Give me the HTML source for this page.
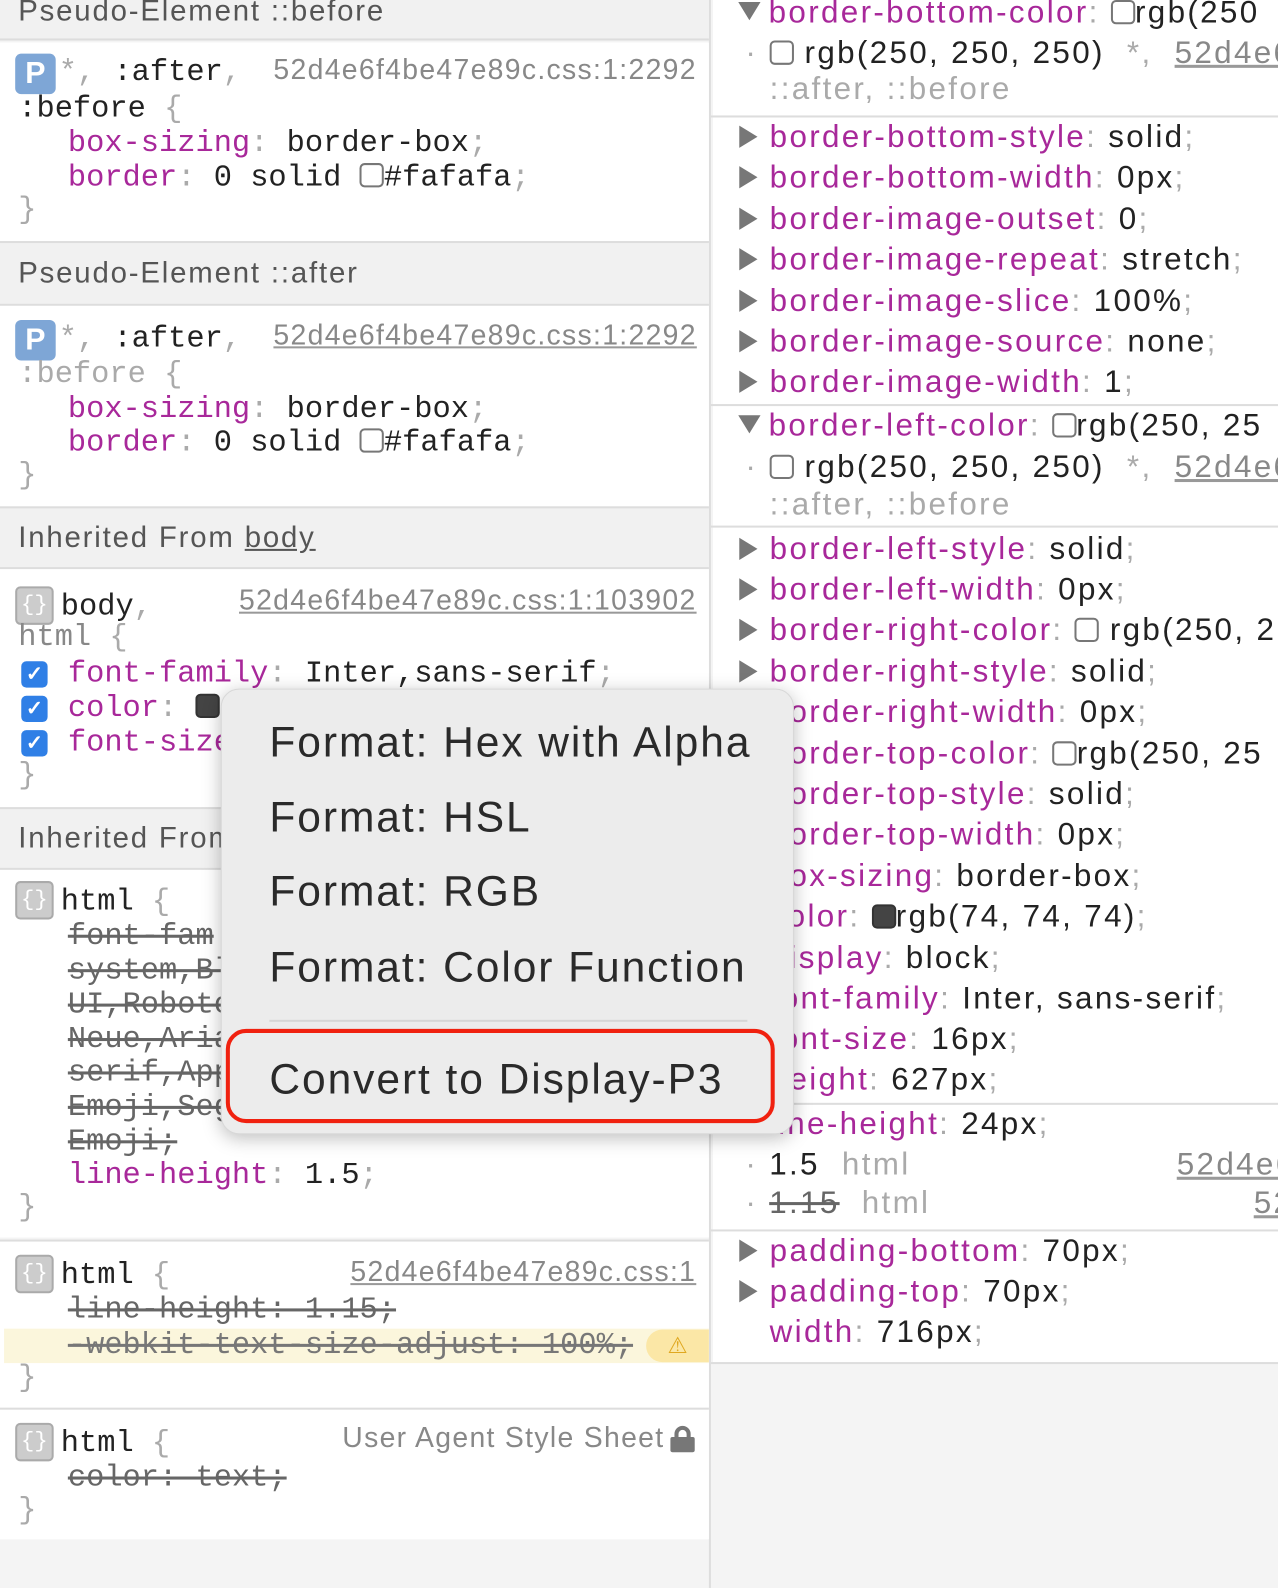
<!DOCTYPE html>
<html><head><meta charset="utf-8"><style>
*{margin:0;padding:0;box-sizing:border-box}
body{width:1278px;height:1588px;overflow:hidden;background:#f4f4f4;position:relative;font-family:"Liberation Sans",sans-serif;color:#222}
#w{position:absolute;left:0;top:0;width:1262px;height:1568px;transform:scale(1.0127);transform-origin:0 0}
.p{position:absolute}
.l{position:absolute;white-space:pre;line-height:34px;height:34px;font-family:"Liberation Mono",monospace;font-size:30px;color:#222}
.s{position:absolute;white-space:pre;line-height:40px;height:40px;font-size:31px;color:#222;letter-spacing:2.3px}
.lk{font-family:"Liberation Sans",sans-serif!important;font-size:28px!important;letter-spacing:1.3px}
.k{color:#a8289a}
.g{color:#aaa}
.dg{color:#888}
.lnk{color:#888;text-decoration:underline;text-decoration-color:#999}
.st{text-decoration:line-through;color:#666}
.hd{position:absolute;left:0;width:700px;background:#f1f1f1;border-top:2px solid #ddd;border-bottom:2px solid #ddd;font-size:29px;color:#555;padding-left:18px;letter-spacing:1.8px}
.wb{position:absolute;left:0;width:700px;background:#fff}
.sw{display:inline-block;width:24px;height:24px;border:2px solid #777;border-radius:5px;vertical-align:-2px;background:#fff}
.icP{position:absolute;width:40px;height:40px;background:#7ea6d6;border-radius:6px;color:#fff;font-family:"Liberation Sans";font-size:30px;font-weight:bold;text-align:center;line-height:40px}
.icB{position:absolute;width:38px;height:38px;background:#ccc;border:2px solid #aaa;border-radius:5px;color:#fff;font-size:22px;text-align:center;line-height:34px;font-family:"Liberation Mono"}
.cb{position:absolute;width:26px;height:26px;background:#2f7fe6;border-radius:5px;color:#fff;font-size:20px;text-align:center;line-height:26px;font-weight:bold}
.tri{display:inline-block;width:0;height:0;border-top:11px solid transparent;border-bottom:11px solid transparent;border-left:18px solid #777;margin-right:12px;vertical-align:-1px}
.trd{display:inline-block;width:0;height:0;border-left:11px solid transparent;border-right:11px solid transparent;border-top:18px solid #777;margin-right:8px;vertical-align:2px}
.rl{position:absolute;left:702px;right:0;height:2px;background:#ddd}
.m{position:absolute;white-space:pre;font-size:42px;line-height:50px;height:50px;color:#2a2a2a;letter-spacing:1.9px}
</style></head><body><div id="w">
<div class="p" style="left:0;top:0;width:702px;height:1568px;background:#f4f4f4;border-right:2px solid #ddd"></div>
<div class="hd" style="top:-2px;height:42px;line-height:22px">Pseudo-Element ::before</div>
<div class="wb" style="top:42px;height:196px"></div>
<div class="hd" style="top:238px;height:64px;line-height:60px">Pseudo-Element ::after</div>
<div class="wb" style="top:302px;height:198px"></div>
<div class="hd" style="top:500px;height:62px;line-height:58px">Inherited From <span style="text-decoration:underline">body</span></div>
<div class="wb" style="top:562px;height:235px"></div>
<div class="hd" style="top:797px;height:62px;line-height:58px">Inherited From html</div>
<div class="wb" style="top:859px;height:363px"></div>
<div class="wb" style="top:1224px;height:166px;border-top:2px solid #ddd"></div>
<div class="wb" style="top:1390px;height:130px;border-top:2px solid #ddd"></div>

<div class="icP" style="left:15px;top:53px">P</div>
<div class="l" style="left:58px;top:55px"><span class="g">*, </span>:after<span class="g">,</span></div>
<div class="l dg lk" style="left:270px;top:52px">52d4e6f4be47e89c.css:1:2292</div>
<div class="l" style="left:18px;top:91px">:before <span class="g">{</span></div>
<div class="l" style="left:67px;top:125px"><span class="k">box-sizing</span><span class="g">:</span> border-box<span class="g">;</span></div>
<div class="l" style="left:67px;top:159px"><span class="k">border</span><span class="g">:</span> 0 solid <span class="sw"></span>#fafafa<span class="g">;</span></div>
<div class="l g" style="left:18px;top:191px">}</div>

<div class="icP" style="left:15px;top:316px">P</div>
<div class="l" style="left:58px;top:318px"><span class="g">*, </span>:after<span class="g">,</span></div>
<div class="l lnk lk" style="left:270px;top:314px">52d4e6f4be47e89c.css:1:2292</div>
<div class="l g" style="left:18px;top:353px">:before {</div>
<div class="l" style="left:67px;top:388px"><span class="k">box-sizing</span><span class="g">:</span> border-box<span class="g">;</span></div>
<div class="l" style="left:67px;top:421px"><span class="k">border</span><span class="g">:</span> 0 solid <span class="sw"></span>#fafafa<span class="g">;</span></div>
<div class="l g" style="left:18px;top:453px">}</div>

<div class="icB" style="left:15px;top:579px">{}</div>
<div class="l" style="left:60px;top:583px">body<span class="g">,</span></div>
<div class="l lnk lk" style="left:236px;top:576px">52d4e6f4be47e89c.css:1:103902</div>
<div class="l dg" style="left:18px;top:613px">html <span class="g">{</span></div>
<div class="cb" style="left:21px;top:653px">✓</div>
<div class="l" style="left:67px;top:649px"><span class="k">font-family</span><span class="g">:</span> Inter,sans-serif<span class="g">;</span></div>
<div class="cb" style="left:21px;top:687px">✓</div>
<div class="l" style="left:67px;top:683px"><span class="k">color</span><span class="g">:</span> <span class="sw" style="background:#444;border-color:#333"></span></div>
<div class="cb" style="left:21px;top:721px">✓</div>
<div class="l" style="left:67px;top:717px"><span class="k">font-size</span></div>
<div class="l g" style="left:18px;top:749px">}</div>

<div class="icB" style="left:15px;top:870px">{}</div>
<div class="l" style="left:60px;top:874px">html <span class="g">{</span></div>
<div class="l st" style="left:67px;top:908px">font-fam</div>
<div class="l st" style="left:67px;top:942px">system,Bl</div>
<div class="l st" style="left:67px;top:976px">UI,Roboto</div>
<div class="l st" style="left:67px;top:1010px">Neue,Aria</div>
<div class="l st" style="left:67px;top:1043px">serif,App</div>
<div class="l st" style="left:67px;top:1077px">Emoji,Seg</div>
<div class="l st" style="left:67px;top:1111px">Emoji;</div>
<div class="l" style="left:67px;top:1144px"><span class="k">line-height</span><span class="g">:</span> 1.5<span class="g">;</span></div>
<div class="l g" style="left:18px;top:1176px">}</div>

<div class="icB" style="left:15px;top:1239px">{}</div>
<div class="l" style="left:60px;top:1243px">html <span class="g">{</span></div>
<div class="l lnk lk" style="left:346px;top:1239px">52d4e6f4be47e89c.css:1</div>
<div class="l st" style="left:67px;top:1277px">line-height: 1.15;</div>
<div class="p" style="left:4px;top:1312px;width:696px;height:34px;background:#fbf6dc"></div>
<div class="p" style="left:638px;top:1313px;width:62px;height:32px;background:#fbe7a6;border-radius:16px 0 0 16px;color:#e0a820;font-size:22px;text-align:center;line-height:32px">⚠</div>
<div class="l st" style="left:67px;top:1312px;color:#777">-webkit-text-size-adjust: 100%;</div>
<div class="l g" style="left:18px;top:1344px">}</div>

<div class="icB" style="left:15px;top:1405px">{}</div>
<div class="l" style="left:60px;top:1409px">html <span class="g">{</span></div>
<div class="l dg lk" style="left:338px;top:1403px">User Agent Style Sheet</div>
<div class="p" style="left:662px;top:1408px;width:24px;height:26px"><div style="position:absolute;left:4px;top:0;width:16px;height:16px;border:4px solid #777;border-radius:8px 8px 0 0"></div><div style="position:absolute;left:0;top:11px;width:24px;height:15px;background:#777;border-radius:2px"></div></div>
<div class="l st" style="left:67px;top:1443px">color: text;</div>
<div class="l g" style="left:18px;top:1475px">}</div>

<div class="p" style="left:704px;top:0;width:560px;height:1345px;background:#fff"></div>
<div class="rl" style="top:114px"></div>
<div class="rl" style="top:399px"></div>
<div class="rl" style="top:519px"></div>
<div class="rl" style="top:1089px"></div>
<div class="rl" style="top:1214px"></div>
<div class="rl" style="top:1345px"></div>

<div class="s" style="left:729px;top:-8px"><span class="trd"></span><span class="k">border-bottom-color</span><span class="g">:</span> <span class="sw"></span>rgb(250</div>
<div class="s" style="left:736px;top:32px"><span class="g">· </span><span class="sw"></span> rgb(250, 250, 250)  <span class="g">*,</span>  <span class="lnk">52d4e6</span></div>
<div class="s g" style="left:760px;top:68px">::after, ::before</div>
<div class="s" style="left:730px;top:115px"><span class="tri"></span><span class="k">border-bottom-style</span><span class="g">:</span> solid<span class="g">;</span></div>
<div class="s" style="left:730px;top:155px"><span class="tri"></span><span class="k">border-bottom-width</span><span class="g">:</span> 0px<span class="g">;</span></div>
<div class="s" style="left:730px;top:196px"><span class="tri"></span><span class="k">border-image-outset</span><span class="g">:</span> 0<span class="g">;</span></div>
<div class="s" style="left:730px;top:236px"><span class="tri"></span><span class="k">border-image-repeat</span><span class="g">:</span> stretch<span class="g">;</span></div>
<div class="s" style="left:730px;top:277px"><span class="tri"></span><span class="k">border-image-slice</span><span class="g">:</span> 100%<span class="g">;</span></div>
<div class="s" style="left:730px;top:317px"><span class="tri"></span><span class="k">border-image-source</span><span class="g">:</span> none<span class="g">;</span></div>
<div class="s" style="left:730px;top:357px"><span class="tri"></span><span class="k">border-image-width</span><span class="g">:</span> 1<span class="g">;</span></div>
<div class="s" style="left:729px;top:400px"><span class="trd"></span><span class="k">border-left-color</span><span class="g">:</span> <span class="sw"></span>rgb(250, 25</div>
<div class="s" style="left:736px;top:441px"><span class="g">· </span><span class="sw"></span> rgb(250, 250, 250)  <span class="g">*,</span>  <span class="lnk">52d4e6</span></div>
<div class="s g" style="left:760px;top:478px">::after, ::before</div>
<div class="s" style="left:730px;top:522px"><span class="tri"></span><span class="k">border-left-style</span><span class="g">:</span> solid<span class="g">;</span></div>
<div class="s" style="left:730px;top:562px"><span class="tri"></span><span class="k">border-left-width</span><span class="g">:</span> 0px<span class="g">;</span></div>
<div class="s" style="left:730px;top:602px"><span class="tri"></span><span class="k">border-right-color</span><span class="g">:</span> <span class="sw"></span> rgb(250, 2</div>
<div class="s" style="left:730px;top:643px"><span class="tri"></span><span class="k">border-right-style</span><span class="g">:</span> solid<span class="g">;</span></div>
<div class="s" style="left:730px;top:683px"><span class="tri"></span><span class="k">border-right-width</span><span class="g">:</span> 0px<span class="g">;</span></div>
<div class="s" style="left:730px;top:724px"><span class="tri"></span><span class="k">border-top-color</span><span class="g">:</span> <span class="sw"></span>rgb(250, 25</div>
<div class="s" style="left:730px;top:764px"><span class="tri"></span><span class="k">border-top-style</span><span class="g">:</span> solid<span class="g">;</span></div>
<div class="s" style="left:730px;top:804px"><span class="tri"></span><span class="k">border-top-width</span><span class="g">:</span> 0px<span class="g">;</span></div>
<div class="s" style="left:730px;top:845px"><span class="tri"></span><span class="k">box-sizing</span><span class="g">:</span> border-box<span class="g">;</span></div>
<div class="s" style="left:730px;top:885px"><span class="tri"></span><span class="k">color</span><span class="g">:</span> <span class="sw" style="background:#444;border-color:#333"></span>rgb(74, 74, 74)<span class="g">;</span></div>
<div class="s" style="left:730px;top:926px"><span class="tri"></span><span class="k">display</span><span class="g">:</span> block<span class="g">;</span></div>
<div class="s" style="left:730px;top:966px"><span class="tri"></span><span class="k">font-family</span><span class="g">:</span> Inter, sans-serif<span class="g">;</span></div>
<div class="s" style="left:730px;top:1006px"><span class="tri"></span><span class="k">font-size</span><span class="g">:</span> 16px<span class="g">;</span></div>
<div class="s" style="left:730px;top:1046px"><span class="tri"></span><span class="k">height</span><span class="g">:</span> 627px<span class="g">;</span></div>
<div class="s" style="left:729px;top:1090px"><span class="trd"></span><span class="k">line-height</span><span class="g">:</span> 24px<span class="g">;</span></div>
<div class="s" style="left:736px;top:1130px"><span class="g">· </span>1.5  <span class="g">html</span></div>
<div class="s lnk" style="left:1162px;top:1130px">52d4e6</div>
<div class="s" style="left:736px;top:1168px"><span class="g">· </span><span class="st">1.15</span>  <span class="g">html</span></div>
<div class="s lnk" style="left:1238px;top:1168px">52</div>
<div class="s" style="left:730px;top:1215px"><span class="tri"></span><span class="k">padding-bottom</span><span class="g">:</span> 70px<span class="g">;</span></div>
<div class="s" style="left:730px;top:1255px"><span class="tri"></span><span class="k">padding-top</span><span class="g">:</span> 70px<span class="g">;</span></div>
<div class="s" style="left:760px;top:1295px"><span class="k">width</span><span class="g">:</span> 716px<span class="g">;</span></div>

<div class="p" style="left:218px;top:680px;width:566px;height:440px;background:#ececec;border-radius:18px;box-shadow:0 4px 18px rgba(0,0,0,0.25);border:1px solid #d8d8d8"></div>
<div class="m" style="left:266px;top:708px">Format: Hex with Alpha</div>
<div class="m" style="left:266px;top:782px">Format: HSL</div>
<div class="m" style="left:266px;top:855px">Format: RGB</div>
<div class="m" style="left:266px;top:930px">Format: Color Function</div>
<div class="p" style="left:266px;top:1007px;width:472px;height:2px;background:#d6d6d6"></div>
<div class="p" style="left:223px;top:1016px;width:542px;height:93px;border:4px solid #f0210f;border-radius:20px"></div>
<div class="m" style="left:266px;top:1041px">Convert to Display-P3</div>
</div></body></html>
